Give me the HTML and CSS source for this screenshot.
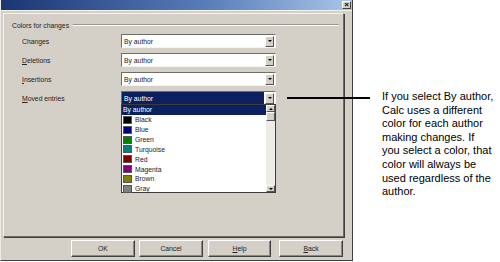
FILE: index.html
```html
<!DOCTYPE html>
<html lang="en">

<head>
    <meta charset="UTF-8" />
    <title>Colors for changes</title>
    <link rel="stylesheet" href="styles.css">
</head>

<body>
    <div class="dialog">
        <div class="titlebar">
            <span class="close">&times;</span>
        </div>
        <div class="dialog-body">
            <div class="panel">
                <div class="group-title"><span>Colors for changes</span></div>

                <div class="row">
                    <label>Changes</label>
                    <div class="combo"><span class="value">By author</span><span class="drop"></span></div>
                </div>
                <div class="row">
                    <label><u>D</u>eletions</label>
                    <div class="combo"><span class="value">By author</span><span class="drop"></span></div>
                </div>
                <div class="row">
                    <label><u>I</u>nsertions</label>
                    <div class="combo"><span class="value">By author</span><span class="drop"></span></div>
                </div>
                <div class="row">
                    <label><u>M</u>oved entries</label>
                    <div class="combo open">
                        <span class="value">By author</span><span class="drop"></span>

                        <!-- open list of the combo -->
                        <div class="list">
                            <ul class="items">
                                <li class="selected">By author</li>
                                <li><i class="swatch" style="background: #000000;"></i>Black</li>
                                <li><i class="swatch" style="background: #000080;"></i>Blue</li>
                                <li><i class="swatch" style="background: #008000;"></i>Green</li>
                                <li><i class="swatch" style="background: #008080;"></i>Turquoise</li>
                                <li><i class="swatch" style="background: #800000;"></i>Red</li>
                                <li><i class="swatch" style="background: #800080;"></i>Magenta</li>
                                <li><i class="swatch" style="background: #808000;"></i>Brown</li>
                                <li><i class="swatch" style="background: #808080;"></i>Gray</li>
                            </ul>
                            <div class="scrollbar">
                                <span class="sb-btn up"></span>
                                <span class="sb-thumb"></span>
                                <span class="sb-track"></span>
                                <span class="sb-btn down"></span>
                            </div>
                        </div>
                    </div>
                </div>
            </div>

            <div class="buttons">
                <button class="ok">OK</button>
                <button class="cancel">Cancel</button>
                <button class="help"><u>H</u>elp</button>
                <button class="back"><u>B</u>ack</button>
            </div>
        </div>
    </div>

    <div class="callout">
        <div class="leader"></div>
        <p>If you select By author,<br>Calc uses a different<br>color for each author<br>making changes. If<br>you select a color, that<br>color will always be<br>used regardless of the<br>author.</p>
    </div>
</body>

</html>
```

FILE: styles.css
```css
/* General Reset */
* {
    margin: 0;
    padding: 0;
    box-sizing: border-box;
}

body {
    background: #fff;
    font-family: "Liberation Sans", Arial, sans-serif;
    color: #000;
    width: 500px;
    height: 262px;
    overflow: hidden;
    position: relative;
}

/* Dialog window */
.dialog {
    width: 353px;
    height: 261px;
    background: #d4d0c8;
    border-left: 1px solid #ecebe6;
    border-right: 1px solid #404040;
    border-bottom: 1px solid #404040;
    font-size: 6.8px;
}

.titlebar {
    height: 11px;
    background: linear-gradient(90deg, #1a3573, #5a7fba 60%, #a9c5ea);
    border-bottom: 1px solid #f2f1ec;
    display: flex;
    justify-content: flex-end;
    align-items: center;
    padding-right: 1px;
}

.close {
    width: 9px;
    height: 8px;
    background: #d4d0c8;
    border: 1px solid;
    border-color: #fff #404040 #404040 #fff;
    font-size: 8px;
    line-height: 5px;
    font-weight: bold;
    text-align: center;
    color: #000;
}

.dialog-body {
    padding: 2px 8px 0 2px;
}

.panel {
    height: 224px;
    border: 1px solid;
    border-color: #f4f3ef #6e6c66 #6e6c66 #f4f3ef;
    box-shadow: 1px 1px 0 #404040;
    padding: 6px 0 0 18px;
}

.group-title {
    display: flex;
    align-items: center;
    height: 10px;
    margin-left: -10px;
    margin-right: 4px;
    margin-bottom: 4px;
    color: #222;
}

.group-title::after {
    content: "";
    flex: 1;
    margin-left: 4px;
    border-top: 1px solid #9a978f;
    border-bottom: 1px solid #fbfaf7;
}

.row {
    display: flex;
    align-items: center;
    height: 14px;
    margin-bottom: 5px;
}

.row label {
    width: 99px;
    color: #222;
}

.combo {
    position: relative;
    width: 155px;
    height: 14px;
    background: #fff;
    border: 1px solid;
    border-color: #6f6d68 #f5f4f0 #f5f4f0 #6f6d68;
    display: flex;
    align-items: center;
}

.combo .value {
    flex: 1;
    padding-left: 2px;
    color: #222;
}

.combo.open .value {
    align-self: stretch;
    display: flex;
    align-items: center;
    background: #0c1f5e;
    color: #fff;
    margin-right: 1px;
}

.drop {
    width: 9px;
    height: 11px;
    margin-right: 1px;
    background: #d4d0c8;
    border: 1px solid;
    border-color: #fff #555 #555 #fff;
    position: relative;
}

.drop::after {
    content: "";
    position: absolute;
    left: 2px;
    top: 3px;
    border-left: 2px solid transparent;
    border-right: 2px solid transparent;
    border-top: 2px solid #000;
}

/* Drop-down list */
.list {
    position: absolute;
    left: -1px;
    top: 12px;
    width: 155px;
    height: 89px;
    background: #fff;
    border: 1px solid #3c3c3c;
    display: flex;
}

.items {
    flex: 1;
    list-style: none;
}

.items li {
    height: 9.86px;
    display: flex;
    align-items: center;
    padding-left: 1px;
    color: #222;
}

.items li.selected {
    background: #0c1f5e;
    color: #fff;
    padding-left: 1px;
}

.swatch {
    width: 9px;
    height: 8px;
    margin-right: 3px;
    border: 1px solid #555;
}

.scrollbar {
    width: 9px;
    display: flex;
    flex-direction: column;
    background: #edece8;
}

.sb-btn,
.sb-thumb {
    height: 7px;
    background: #d4d0c8;
    border: 1px solid;
    border-color: #fff #555 #555 #fff;
    position: relative;
}

.sb-thumb {
    height: 9px;
}

.sb-track {
    flex: 1;
}

.sb-btn::after {
    content: "";
    position: absolute;
    left: 2px;
    top: 2px;
    border-left: 2px solid transparent;
    border-right: 2px solid transparent;
}

.sb-btn.up::after {
    border-bottom: 2px solid #000;
}

.sb-btn.down::after {
    border-top: 2px solid #000;
}

/* Button row */
.buttons {
    display: flex;
    justify-content: flex-end;
    gap: 4px;
    margin-top: 3px;
    padding-right: 1px;
}

button {
    font-family: inherit;
    font-size: 6.8px;
    color: #222;
    width: 64px;
    height: 17px;
    background: #d4d0c8;
    border: 1px solid;
    border-color: #fff #404040 #404040 #fff;
    box-shadow: inset -1px -1px 0 #8a8882;
}

button.help {
    width: 63px;
    margin-left: 1px;
    margin-right: 4px;
}

/* Annotation */
.callout {
    position: absolute;
    left: 287px;
    top: 90px;
    display: flex;
    align-items: flex-start;
    gap: 12px;
}

.leader {
    width: 83px;
    height: 2px;
    margin-top: 7px;
    background: #000;
}

.callout p {
    font-family: "Liberation Sans", Arial, sans-serif;
    font-size: 11px;
    line-height: 13.6px;
    color: #000;
    white-space: nowrap;
}
```
